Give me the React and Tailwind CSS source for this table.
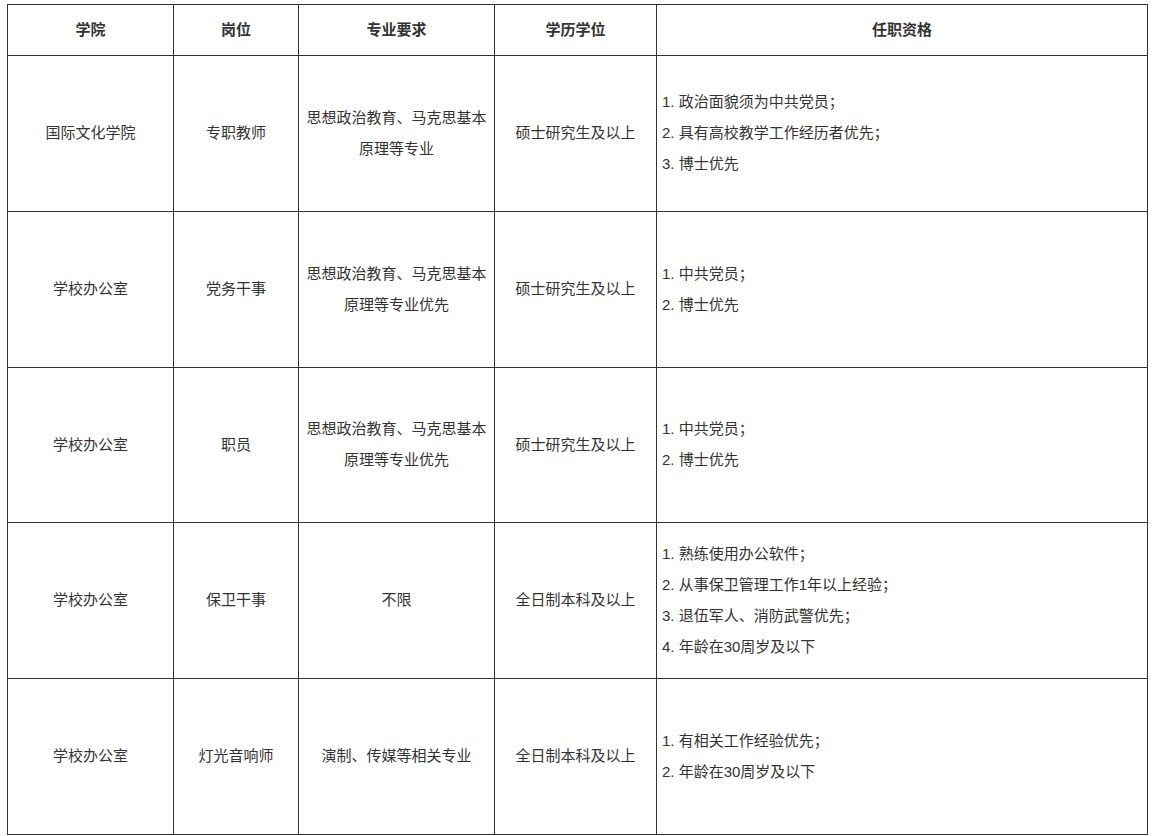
import React from "react";

const rows = [
  {
    a: "国际文化学院",
    b: "专职教师",
    c: ["思想政治教育、马克思基本", "原理等专业"],
    d: "硕士研究生及以上",
    e: ["1. 政治面貌须为中共党员；", "2. 具有高校教学工作经历者优先；", "3. 博士优先"],
    h: "h-[156px]",
  },
  {
    a: "学校办公室",
    b: "党务干事",
    c: ["思想政治教育、马克思基本", "原理等专业优先"],
    d: "硕士研究生及以上",
    e: ["1. 中共党员；", "2. 博士优先"],
    h: "h-[156px]",
  },
  {
    a: "学校办公室",
    b: "职员",
    c: ["思想政治教育、马克思基本", "原理等专业优先"],
    d: "硕士研究生及以上",
    e: ["1. 中共党员；", "2. 博士优先"],
    h: "h-[155px]",
  },
  {
    a: "学校办公室",
    b: "保卫干事",
    c: ["不限"],
    d: "全日制本科及以上",
    e: ["1. 熟练使用办公软件；", "2. 从事保卫管理工作1年以上经验；", "3. 退伍军人、消防武警优先；", "4. 年龄在30周岁及以下"],
    h: "h-[156px]",
  },
  {
    a: "学校办公室",
    b: "灯光音响师",
    c: ["演制、传媒等相关专业"],
    d: "全日制本科及以上",
    e: ["1. 有相关工作经验优先；", "2. 年龄在30周岁及以下"],
    h: "h-[156px]",
  },
];

export default function App() {
  const cell = "border border-[#333] align-middle p-0";
  return (
    <div
      className="w-[1154px] h-[836px] bg-white text-[#333] text-[15px]"
      style={{ fontFamily: '"Liberation Sans", "Noto Sans CJK SC", sans-serif' }}
    >
      <div className="pt-[4px] pl-[7px]">
        <table className="border-collapse w-[1140px] table-fixed">
          <colgroup>
            <col className="w-[166px]" />
            <col className="w-[125px]" />
            <col className="w-[196px]" />
            <col className="w-[162px]" />
            <col className="w-[491px]" />
          </colgroup>
          <thead>
            <tr className="h-[51px]">
              {["学院", "岗位", "专业要求", "学历学位", "任职资格"].map((h) => (
                <th key={h} className={`${cell} font-bold text-center`}>
                  {h}
                </th>
              ))}
            </tr>
          </thead>
          <tbody>
            {rows.map((r, i) => (
              <tr key={i} className={r.h}>
                <td className={`${cell} text-center`}>{r.a}</td>
                <td className={`${cell} text-center`}>{r.b}</td>
                <td className={`${cell} text-center leading-[31px] pb-[2px]`}>
                  {r.c.map((l, j) => (
                    <div key={j}>{l}</div>
                  ))}
                </td>
                <td className={`${cell} text-center`}>{r.d}</td>
                <td className={`${cell} text-left pl-[5px] leading-[31px] pb-[2px]`}>
                  {r.e.map((l, j) => (
                    <div key={j}>{l}</div>
                  ))}
                </td>
              </tr>
            ))}
          </tbody>
        </table>
      </div>
    </div>
  );
}
